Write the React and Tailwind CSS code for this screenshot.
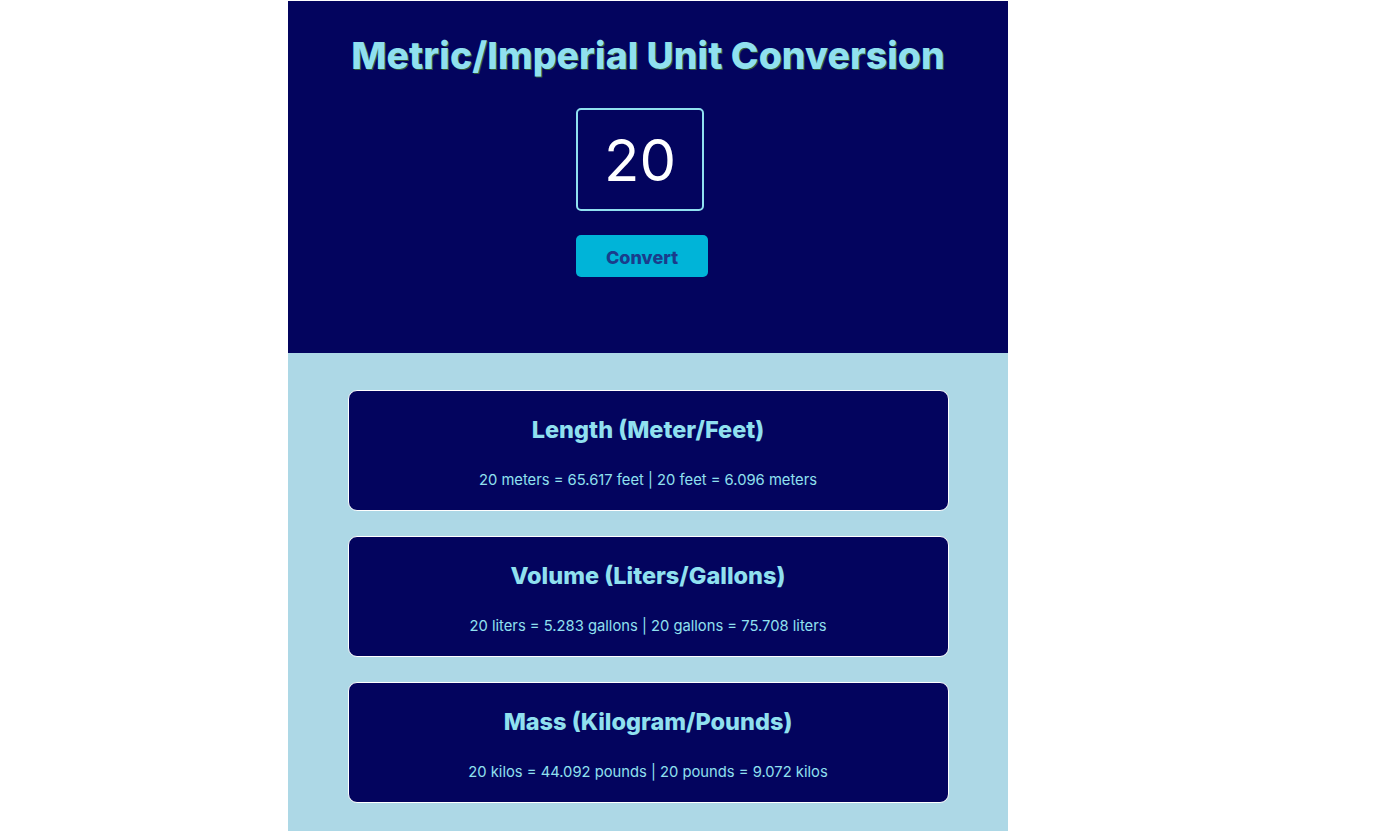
export default function App() {
  const cards = [
    { title: 'Length (Meter/Feet)', text: '20 meters = 65.617 feet | 20 feet = 6.096 meters' },
    { title: 'Volume (Liters/Gallons)', text: '20 liters = 5.283 gallons | 20 gallons = 75.708 liters' },
    { title: 'Mass (Kilogram/Pounds)', text: '20 kilos = 44.092 pounds | 20 pounds = 9.072 kilos' },
  ];

  return (
    <div className="min-h-screen bg-white pt-px" style={{ fontFamily: 'Inter, "Open Sans", sans-serif' }}>
      <main className="ml-[288px] w-[720px]">
        <section className="h-[352px] bg-[#03045e] pt-[33px]">
          <h1 className="text-center text-[37.5px] leading-[44px] font-extrabold text-[#90e0ef] [text-shadow:1px_1px_0_#2f5a3a]">
            Metric/Imperial Unit Conversion
          </h1>
          <div className="ml-[288px] flex flex-col items-start">
            <input
              type="text"
              defaultValue="20"
              className="mt-[30px] w-[128px] h-[103px] border-2 border-[#90e0ef] rounded-[5px] bg-transparent text-white text-[58px] text-center outline-none"
            />
            <button
              type="button"
              className="mt-[24px] w-[132px] h-[42px] pt-[3px] rounded-[5px] bg-[#00b4d8] text-[#1a3c8c] font-extrabold text-[18px]"
            >
              Convert
            </button>
          </div>
        </section>
        <section className="bg-[#add8e6] pt-[37px] pb-[30px] flex flex-col items-center gap-[25px]">
          {cards.map((c) => (
            <div
              key={c.title}
              className="w-[601px] h-[121px] rounded-[9px] border border-white bg-[#03045e] flex flex-col items-center pt-[24px]"
            >
              <h2 className="text-[23.5px] leading-[30px] font-extrabold text-[#90e0ef]">{c.title}</h2>
              <p className="mt-[25px] text-[14.75px] leading-[20px] text-[#90e0ef]">{c.text}</p>
            </div>
          ))}
        </section>
      </main>
    </div>
  );
}
